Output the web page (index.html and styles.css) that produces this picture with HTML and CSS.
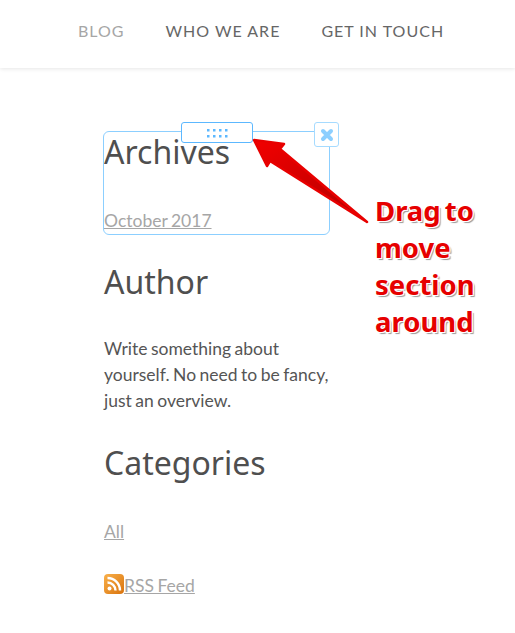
FILE: index.html
```html
<!DOCTYPE html>
<html lang="en">
<head>
<meta charset="utf-8">
<title>Blog</title>
<link rel="stylesheet" href="styles.css">
</head>
<body>
<header class="site-header">
  <nav class="nav">
    <a class="nav-link is-active" href="#">BLOG</a>
    <a class="nav-link" href="#">WHO WE ARE</a>
    <a class="nav-link" href="#">GET IN TOUCH</a>
  </nav>
</header>
<main class="sidebar">
  <section class="widget widget-archives">
    <div class="outline"></div>
    <div class="handle">
      <svg width="22" height="9" viewBox="0 0 22 9" class="dots"><g fill="#5cb8ff"><rect x="0" y="0" width="2.500" height="2.500"/><rect x="6" y="0" width="2.500" height="2.500"/><rect x="12" y="0" width="2.500" height="2.500"/><rect x="18" y="0" width="2.500" height="2.500"/><rect x="0" y="6" width="2.500" height="2.500"/><rect x="6" y="6" width="2.500" height="2.500"/><rect x="12" y="6" width="2.500" height="2.500"/><rect x="18" y="6" width="2.500" height="2.500"/></g></svg>
    </div>
    <div class="close">
      <svg width="14" height="14" viewBox="0 0 14 14"><path d="M3 3L11 11M11 3L3 11" stroke="#8ccfff" stroke-width="4" stroke-linecap="round"/></svg>
    </div>
    <h2 class="title">Archives</h2>
    <p class="para"><a href="#">October 2017</a></p>
  </section>
  <section class="widget">
    <h2 class="title">Author</h2>
    <p class="para">Write something about yourself. No need to be fancy, just an overview.</p>
  </section>
  <section class="widget">
    <h2 class="title">Categories</h2>
    <p class="para"><a href="#">All</a></p>
    <p class="para rss">
      <svg class="rss-icon" width="20" height="20" viewBox="0 0 20 20"><defs><linearGradient id="o" x1="0" y1="0" x2="1" y2="1"><stop offset="0" stop-color="#f9b04a"/><stop offset="1" stop-color="#d9730d"/></linearGradient></defs><rect width="20" height="20" rx="4" fill="url(#o)"/><circle cx="5.500" cy="14.500" r="2" fill="#fff"/><path d="M3.500 8.500a8 8 0 0 1 8 8M3.500 4a12.500 12.500 0 0 1 12.500 12.500" fill="none" stroke="#fff" stroke-width="2.400"/></svg><a href="#">RSS Feed</a>
    </p>
  </section>
</main>
<svg class="arrow" width="130" height="100" viewBox="0 0 130 100">
  <defs><linearGradient id="r" x1="0" y1="0" x2="1" y2="1"><stop offset="0" stop-color="#f20000"/><stop offset="1" stop-color="#b00000"/></linearGradient></defs>
  <path d="M2 3L32 7L28 12L115 85L18 24L15 29Z" fill="url(#r)" stroke="#e80000" stroke-width="2.500" stroke-linejoin="round"/>
</svg>
<div class="note">Drag to<br>move<br>section<br>around</div>
</body>
</html>
```

FILE: styles.css
```css
html, body { margin: 0; padding: 0; }
body {
  position: relative;
  width: 515px;
  height: 633px;
  overflow: hidden;
  background: #fff;
  font-family: Lato, sans-serif;
  color: #4f4f4f;
}
.site-header {
  height: 68px;
  box-shadow: 0 1px 4px rgba(0, 0, 0, 0.1);
  display: flex;
  justify-content: center;
}
.nav {
  display: flex;
  gap: 41px;
  padding-top: 20px;
  padding-left: 7px;
}
.nav-link {
  font-size: 16px;
  line-height: 22px;
  letter-spacing: 1px;
  color: #666;
  text-decoration: none;
}
.nav-link.is-active { color: #a6a6a6; }
.sidebar {
  width: 232px;
  margin-left: 104px;
  padding-top: 64px;
}
.widget { position: relative; }
.title {
  margin: 0;
  font-family: "Noto Sans", sans-serif;
  font-weight: 400;
  font-size: 32px;
  line-height: 40px;
  color: #4f4f4f;
}
.para {
  margin: 0;
  font-size: 17.500px;
  line-height: 26px;
  word-spacing: -1px;
  color: #555;
}
.para a { color: #a6a6a6; text-decoration: underline; }
.widget-archives { height: 130px; }
.widget-archives .para { padding-top: 36px; }
.widget:nth-of-type(2) { height: 181px; }
.widget:nth-of-type(2) .para { padding-top: 34px; }
.widget:nth-of-type(3) .para { padding-top: 36px; }
.widget:nth-of-type(3) .rss { padding-top: 28px; }
.rss-icon { vertical-align: -2px; }
.outline {
  position: absolute;
  left: -1px;
  top: -1px;
  width: 225px;
  height: 102px;
  border: 1px solid #8ccfff;
  border-radius: 6px;
}
.handle {
  position: absolute;
  left: 77px;
  top: -10px;
  width: 70px;
  height: 19px;
  background: #fff;
  border: 1px solid #5cb8ff;
  border-radius: 3px;
  display: flex;
  justify-content: center;
  align-items: center;
}
.dots { display: block; margin-left: 2px; margin-top: 1px; }
.close {
  position: absolute;
  left: 210px;
  top: -10px;
  width: 23px;
  height: 23px;
  background: #fff;
  border: 1px solid #a6dbff;
  border-radius: 3px;
  display: flex;
  justify-content: center;
  align-items: center;
}
.arrow {
  position: absolute;
  left: 252px;
  top: 137px;
}
.note {
  position: absolute;
  left: 375px;
  top: 192px;
  font-family: "Noto Sans", sans-serif;
  font-weight: 700;
  font-size: 27.500px;
  line-height: 37px;
  word-spacing: -3px;
  color: #e60000;
  text-shadow: 1px 1px 0 #fff, -1px -1px 0 #fff, 1px -1px 0 #fff, -1px 1px 0 #fff, 2px 2px 1px #999;
}
```
